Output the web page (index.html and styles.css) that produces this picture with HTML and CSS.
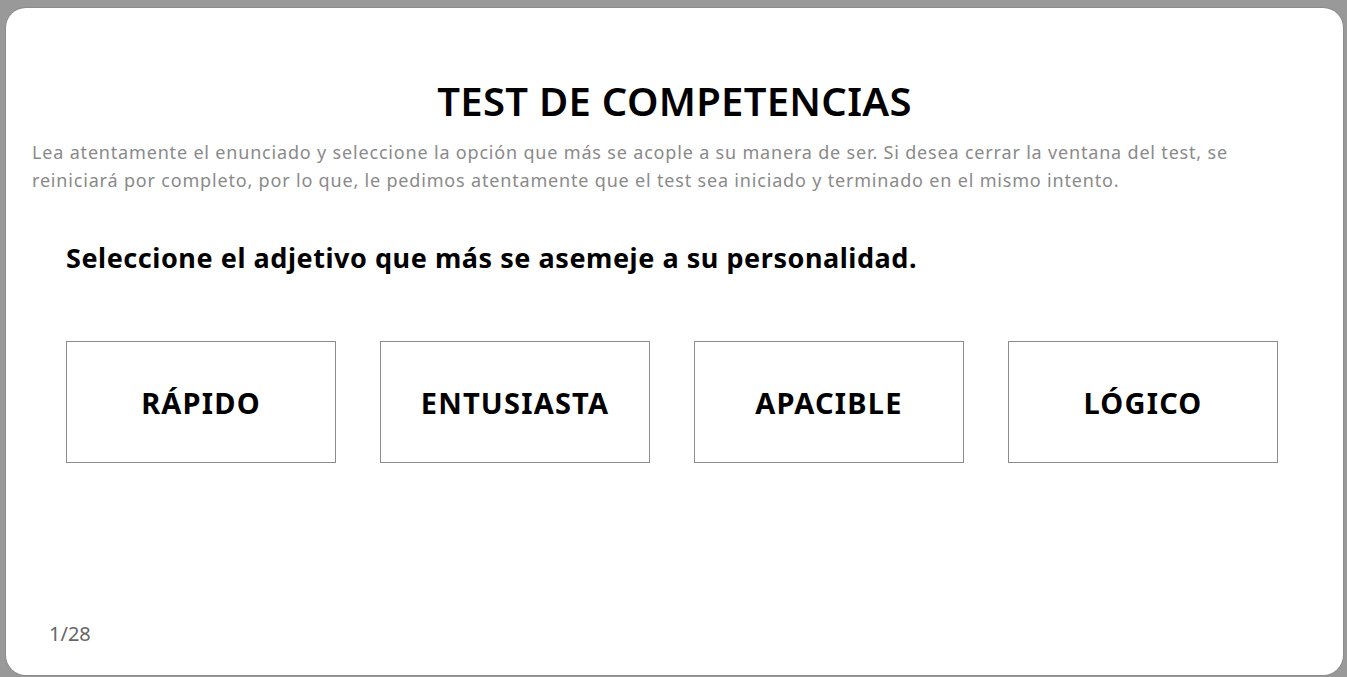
FILE: index.html
```html
<!DOCTYPE html>
<html lang="es">
<head>
<meta charset="utf-8">
<title>Test de competencias</title>
<link rel="stylesheet" href="styles.css">
</head>
<body>
<div class="overlay">
  <div class="modal">
    <h1 class="title">TEST DE COMPETENCIAS</h1>
    <p class="desc">Lea atentamente el enunciado y seleccione la opción que más se acople a su manera de ser. Si desea cerrar la ventana del test, se reiniciará por completo, por lo que, le pedimos atentamente que el test sea iniciado y terminado en el mismo intento.</p>
    <h2 class="question">Seleccione el adjetivo que más se asemeje a su personalidad.</h2>
    <div class="options">
      <button class="option">RÁPIDO</button>
      <button class="option">ENTUSIASTA</button>
      <button class="option">APACIBLE</button>
      <button class="option">LÓGICO</button>
    </div>
    <div class="counter">1/28</div>
  </div>
</div>
</body>
</html>
```

FILE: styles.css
```css
* { box-sizing: border-box; }
html, body { margin: 0; padding: 0; height: 100%; }
body {
  background: #999999;
  font-family: "Noto Sans", "Open Sans", sans-serif;
  overflow: hidden;
}
.overlay {
  width: 1347px;
  height: 677px;
  padding: 8px 4px 2px 6px;
}
.modal {
  width: 100%;
  height: 100%;
  background: #ffffff;
  border-radius: 20px;
  box-shadow: 0 0 0 1px #8c8c8c;
  display: flex;
  flex-direction: column;
  padding: 0 26px 0 26px;
}
.title {
  margin: 70px 0 0 0;
  text-align: center;
  font-size: 40px;
  line-height: 46px;
  font-weight: 600;
  letter-spacing: 0.3px;
  color: #000;
}
.desc {
  margin: 14px 0 0 0;
  font-size: 18px;
  line-height: 28px;
  letter-spacing: 0.82px;
  color: #8a8a8a;
  font-weight: 400;
}
.question {
  margin: 47px 0 0 34px;
  font-size: 27px;
  line-height: 34px;
  letter-spacing: 0.55px;
  font-weight: 700;
  color: #000;
}
.options {
  display: flex;
  gap: 44px;
  margin: 66px 0 0 34px;
}
.option {
  width: 270px;
  height: 122px;
  background: #fff;
  border: 1px solid #8c8c8c;
  font-family: inherit;
  font-size: 29px;
  font-weight: 700;
  letter-spacing: 1.2px;
  color: #000;
  padding: 0;
}
.counter {
  margin: auto 0 28px 17px;
  font-size: 20px;
  line-height: 26px;
  color: #666666;
}
```
